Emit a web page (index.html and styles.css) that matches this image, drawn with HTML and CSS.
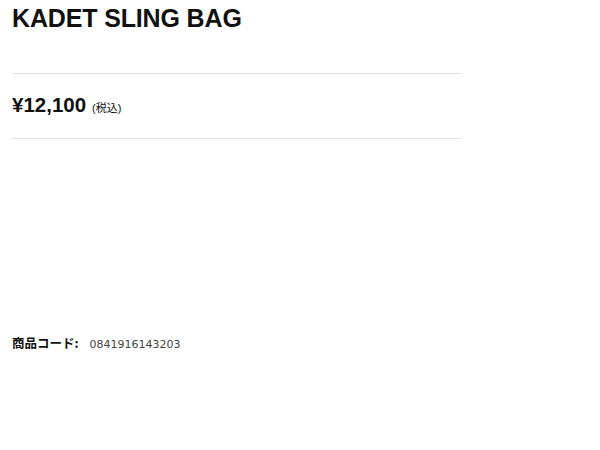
FILE: index.html
```html
<!DOCTYPE html>
<html lang="ja">
<head>
  <meta charset="UTF-8" />
  <title>KADET SLING BAG</title>
  <link rel="stylesheet" href="styles.css">
</head>
<body>
  <main class="product">
    <h1 class="product-name">KADET SLING BAG</h1>

    <div class="price-box">
      <span class="price">¥12,100</span>
      <span class="tax">(税込)</span>
    </div>

    <p class="code">
      <span class="code-label">商品コード:</span>
      <span class="code-value">0841916143203</span>
    </p>
  </main>
</body>
</html>
```

FILE: styles.css
```css
body {
  margin: 0;
  background: #fff;
  color: #111;
  font-family: "Liberation Sans", "Noto Sans CJK JP", sans-serif;
}

.product {
  width: 450px;
  padding: 0 12px;
}

.product-name {
  font-size: 25px;
  font-weight: bold;
  letter-spacing: -0.15px;
  margin: 0;
  padding-top: 3px;
  line-height: 30px;
}

.price-box {
  margin-top: 40px;
  border-top: 1px solid #e2e2e2;
  border-bottom: 1px solid #e2e2e2;
  height: 66px;
  display: flex;
  align-items: baseline;
  gap: 6px;
  padding-top: 19px;
  box-sizing: border-box;
}

.price {
  font-size: 20.5px;
  font-weight: bold;
}

.tax {
  font-size: 11px;
}

.code {
  margin: 194px 0 0;
  font-size: 12.5px;
  display: flex;
  align-items: baseline;
  gap: 11px;
}

.code-label {
  font-weight: bold;
  font-family: "Noto Sans CJK JP", sans-serif;
}

.code-value {
  color: #444;
  font-family: "DejaVu Sans", sans-serif;
  font-size: 11px;
}
```
